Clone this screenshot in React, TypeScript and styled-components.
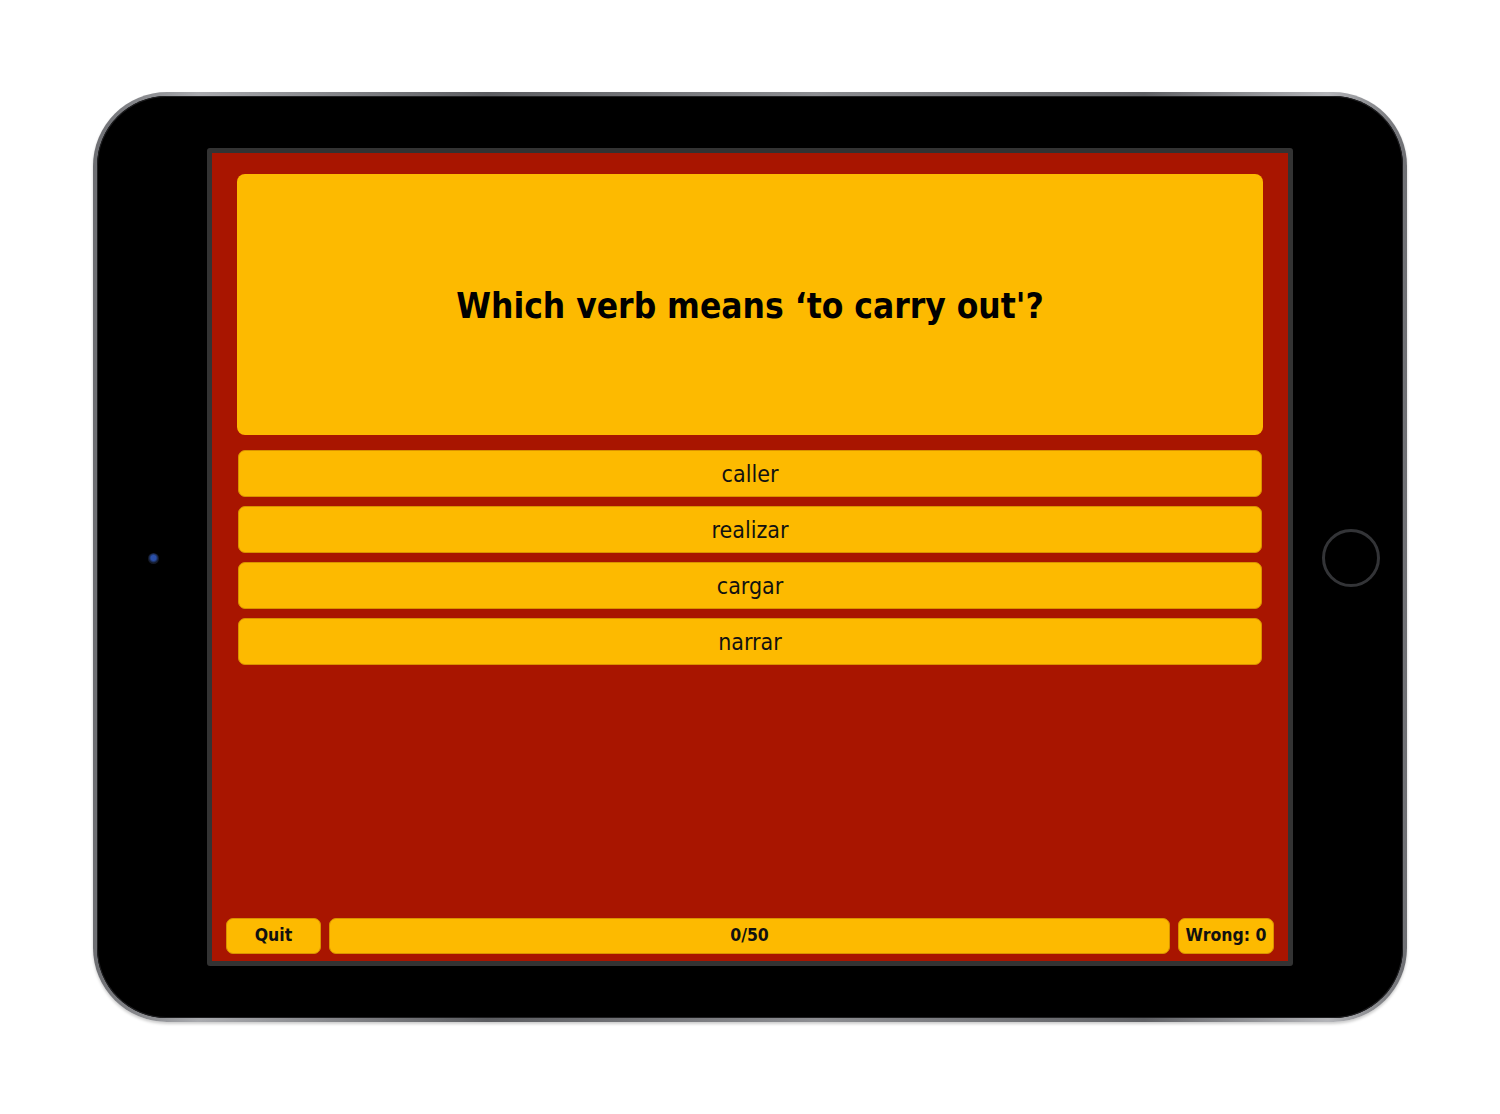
import styled, { createGlobalStyle } from "styled-components";

const GlobalStyle = createGlobalStyle`
  html, body {
    margin: 0;
    padding: 0;
    background: #ffffff;
  }
  body {
    font-family: "DejaVu Sans Condensed", "DejaVu Sans", sans-serif;
  }
`;

const Page = styled.div`
  width: 1500px;
  height: 1114px;
  display: flex;
  justify-content: center;
  padding-top: 92px;
  box-sizing: border-box;
`;

const Device = styled.div`
  position: relative;
  width: 1314px;
  height: 930px;
  box-sizing: border-box;
  padding: 52px 110px;
  border-radius: 74px;
  border: 4px solid transparent;
  background:
    linear-gradient(#000, #000) padding-box,
    linear-gradient(90deg, #6d6e72 0%, #a9aaae 8%, #5c5d61 30%, #8d8e92 55%, #5f6064 80%, #b4b5b9 94%, #6d6e72 100%) border-box;
  box-shadow: inset 0 0 0 1px #1e1e20, 0 2px 3px rgba(0, 0, 0, 0.2);
`;

const Camera = styled.div`
  position: absolute;
  left: 51px;
  top: 457px;
  width: 11px;
  height: 11px;
  border-radius: 50%;
  background: radial-gradient(circle at 50% 45%, #2a4fa8 0 30%, #141a2a 60%, #1c1c1e 100%);
`;

const HomeButton = styled.div`
  position: absolute;
  right: 23px;
  top: 433px;
  width: 52px;
  height: 52px;
  border-radius: 50%;
  border: 3px solid #333437;
  background: #000;
`;

const Screen = styled.div`
  width: 100%;
  height: 100%;
  box-sizing: border-box;
  border: 5px solid #333333;
  border-radius: 3px;
  background: #a81500;
  display: flex;
  flex-direction: column;
  padding: 21px 25px 7px;
`;

const Question = styled.div`
  height: 261px;
  flex: none;
  border-radius: 8px;
  background: #fdba00;
  display: flex;
  align-items: center;
  justify-content: center;
  font-weight: bold;
  font-size: 35px;
  color: #000;
  padding-top: 2px;
  box-sizing: border-box;
`;

const Answers = styled.div`
  display: flex;
  flex-direction: column;
  gap: 9px;
  margin: 15px 1px 0;
`;

const Answer = styled.div`
  height: 47px;
  box-sizing: border-box;
  border: 1px solid #d99200;
  border-radius: 7px;
  background: #fdba00;
  display: flex;
  align-items: center;
  justify-content: center;
  font-size: 23px;
  color: #111;
`;

const Spacer = styled.div`
  flex: 1;
`;

const BottomBar = styled.div`
  display: flex;
  gap: 8px;
  margin: 0 -11px;
  height: 36px;
`;

const BarItem = styled.div<{ $width?: number }>`
  ${(p) => (p.$width ? `width: ${p.$width}px; flex: none;` : "flex: 1;")}
  box-sizing: border-box;
  border: 1px solid #d99200;
  border-radius: 7px;
  background: #fdba00;
  display: flex;
  align-items: center;
  justify-content: center;
  padding-bottom: 3px;
  font-size: 17.5px;
  font-weight: bold;
  color: #111;
`;

const answers = ["caller", "realizar", "cargar", "narrar"];

function App() {
  return (
    <Page>
      <GlobalStyle />
      <Device>
        <Camera />
        <HomeButton />
        <Screen>
          <Question>Which verb means ‘to carry out'?</Question>
          <Answers>
            {answers.map((a) => (
              <Answer key={a}>{a}</Answer>
            ))}
          </Answers>
          <Spacer />
          <BottomBar>
            <BarItem $width={95}>Quit</BarItem>
            <BarItem>0/50</BarItem>
            <BarItem $width={96}>Wrong: 0</BarItem>
          </BottomBar>
        </Screen>
      </Device>
    </Page>
  );
}

export default App;
